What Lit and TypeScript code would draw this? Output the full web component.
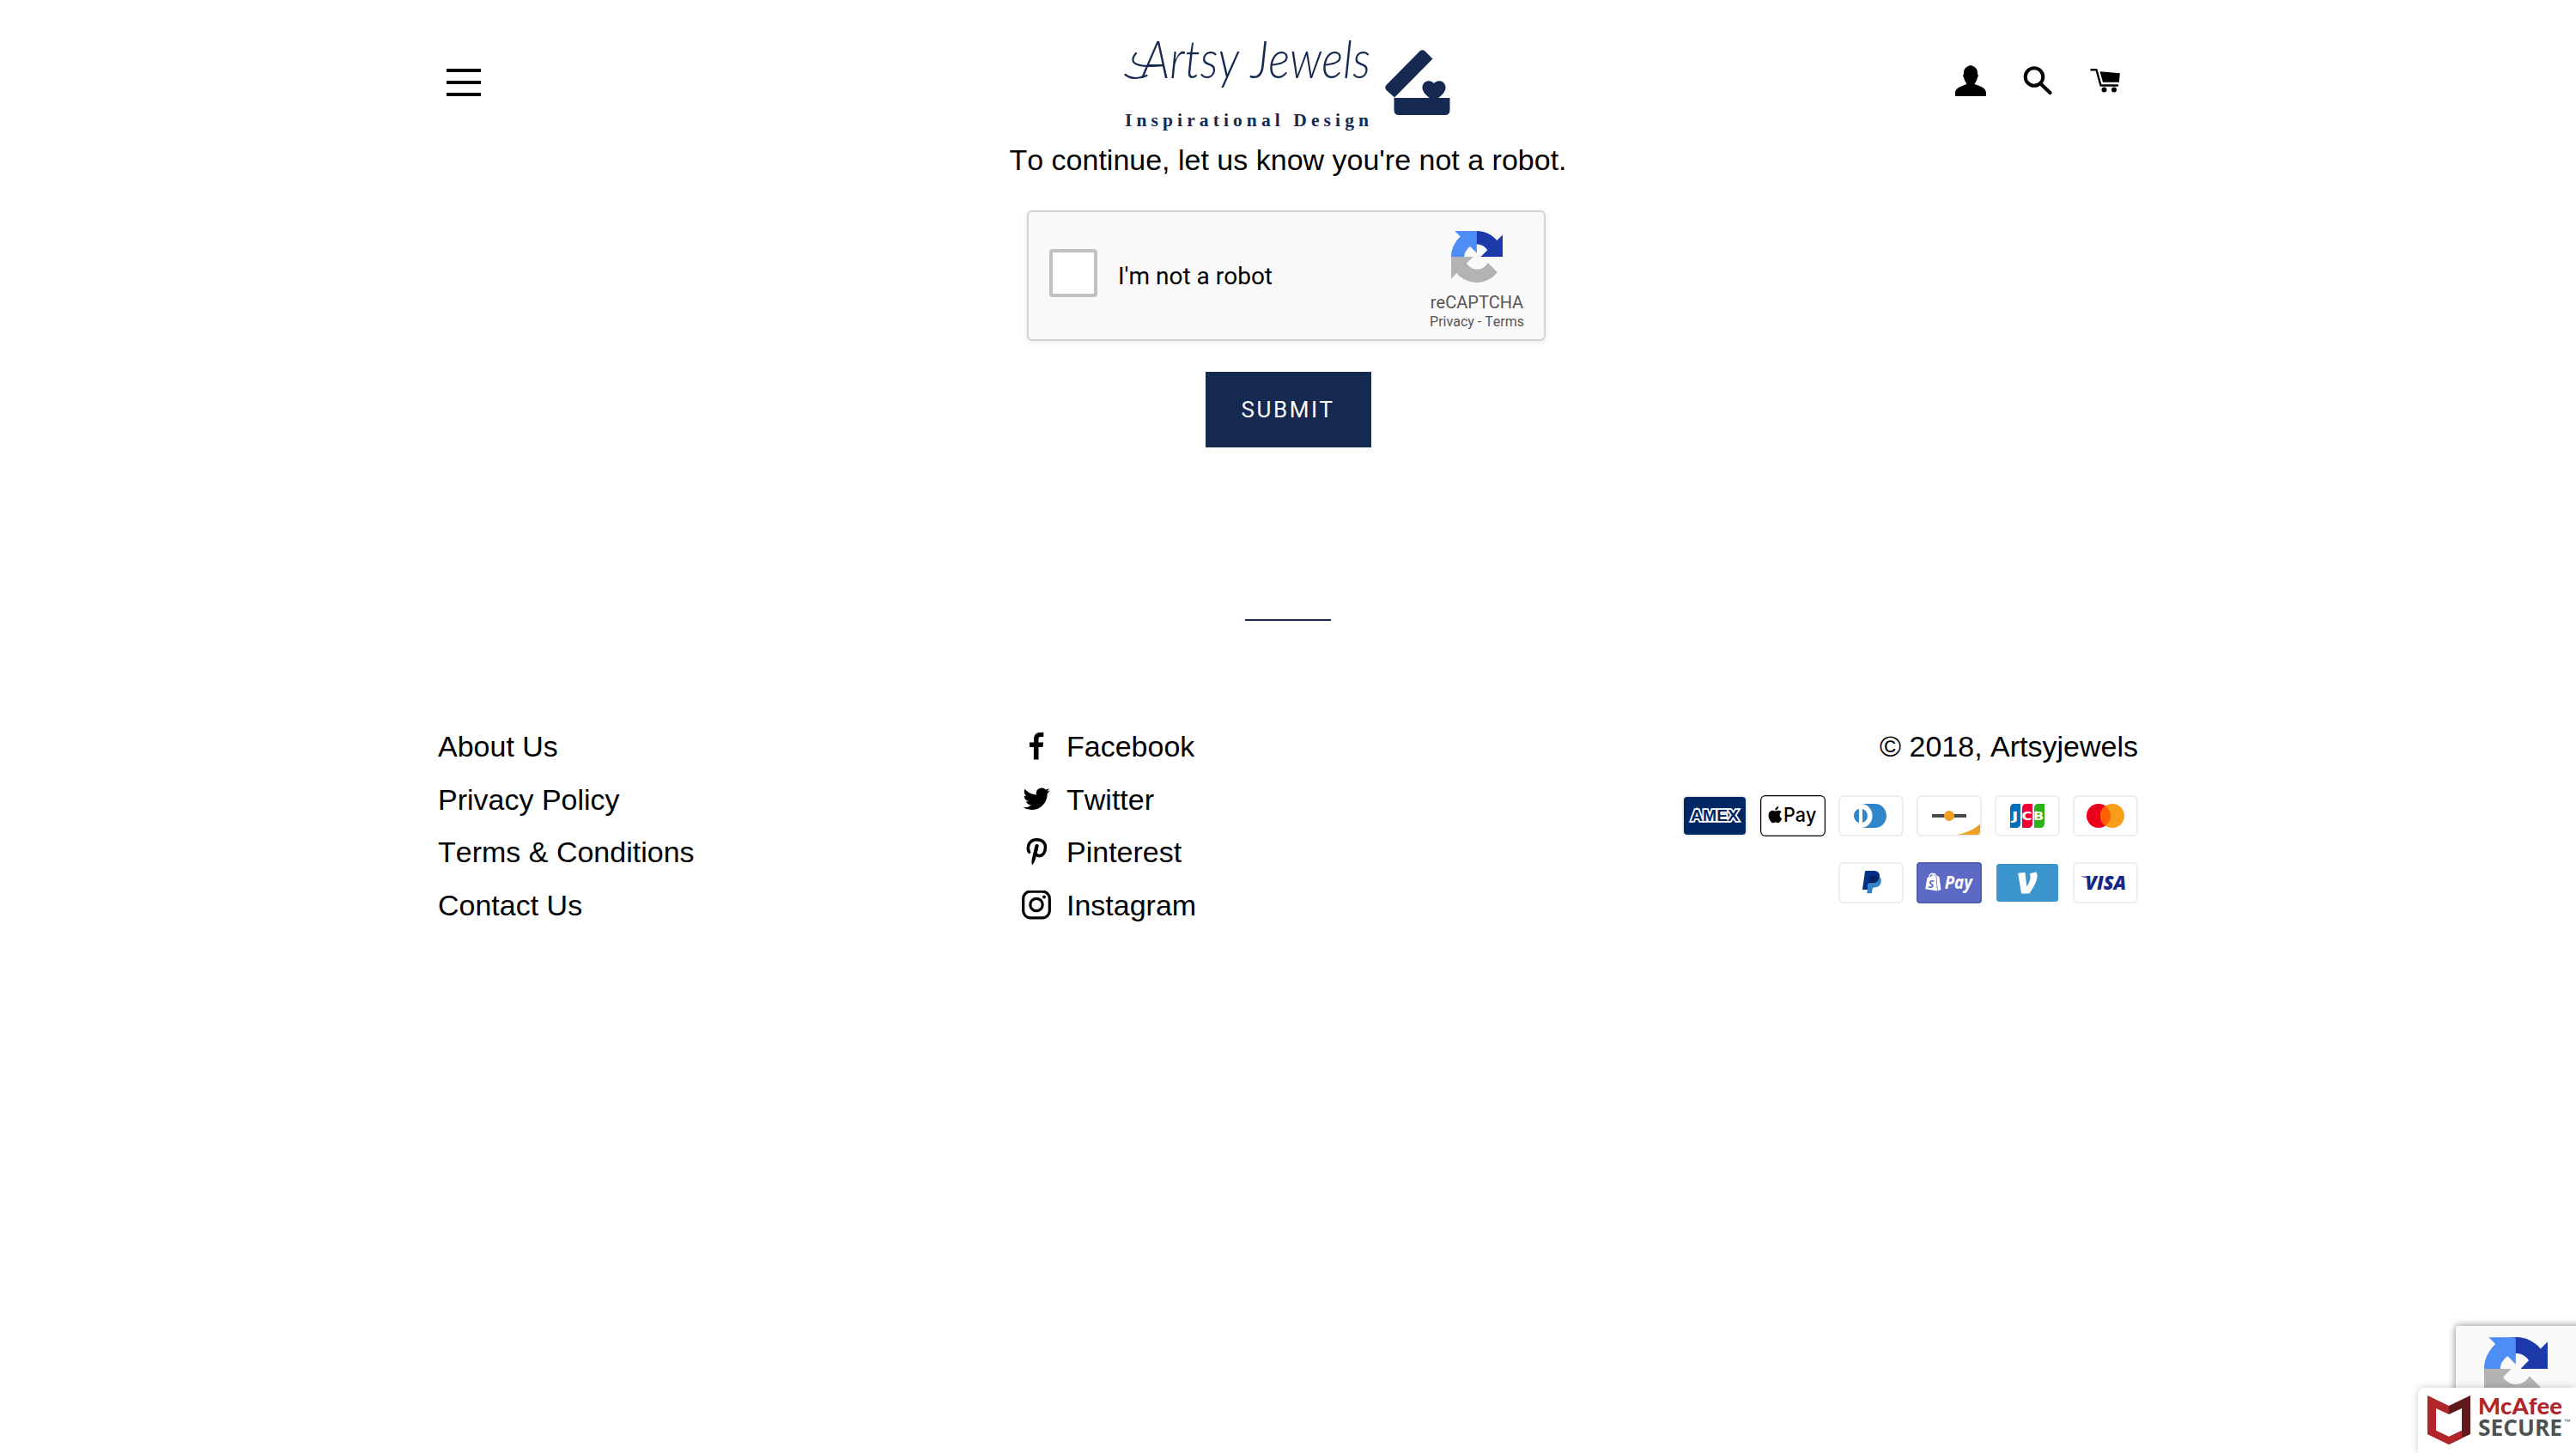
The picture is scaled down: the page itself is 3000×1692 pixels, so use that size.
import { LitElement, html, css, svg } from "lit";
import { customElement } from "lit/decorators.js";

const recaptchaMark = html`<svg class="mark" viewBox="0 0 64 64">
  <path fill="#1c3aa9" d="M64 31.955l-.033-1.37V4.687l-7.16 7.16C50.948 4.674 42.033.093 32.05.093c-10.4 0-19.622 4.96-25.458 12.64l11.736 11.86a15.55 15.55 0 0 1 4.754-5.334c2.05-1.6 4.952-2.906 8.968-2.906.485 0 .86.057 1.135.163 4.976.393 9.288 3.14 11.828 7.124l-8.307 8.307L64 31.953"/>
  <path fill="#4c8df6" d="M31.862.094l-1.37.033H4.594l7.16 7.16C4.58 13.147 0 22.06 0 32.046c0 10.4 4.96 19.622 12.64 25.458L24.5 45.768a15.55 15.55 0 0 1-5.334-4.754c-1.6-2.05-2.906-4.952-2.906-8.968 0-.485.057-.86.163-1.135.393-4.976 3.14-9.288 7.124-11.828l8.307 8.307L31.86.095"/>
  <path fill="#b3b3b3" d="M.001 32.045l.033 1.37v25.898l7.16-7.16c5.86 7.173 14.774 11.754 24.76 11.754 10.4 0 19.622-4.96 25.458-12.64l-11.736-11.86a15.55 15.55 0 0 1-4.754 5.334c-2.05 1.6-4.952 2.906-8.968 2.906-.485 0-.86-.057-1.135-.163-4.976-.393-9.288-3.14-11.828-7.124l8.307-8.307c-10.522.04-22.4.066-27.295-.005"/>
</svg>`;

const whiteCard = svg`<rect width="38" height="24" rx="3" fill="#ededed"/><rect x="1" y="1" width="36" height="22" rx="2" fill="#fff"/>`;

const cards = [
  svg`<rect width="38" height="24" rx="3" fill="#ededed"/><rect x="1" y="1" width="36" height="22" rx="2" fill="#002663"/>
    <text x="5" y="14.9" textLength="28" lengthAdjust="spacingAndGlyphs" font-family="Liberation Sans" font-weight="700" font-size="9" fill="#002663" stroke="#fff" stroke-width="1.7" paint-order="stroke">AMEX</text>`,
  svg`<rect width="38" height="24" rx="3" fill="#000"/><rect x=".6" y=".6" width="36.8" height="22.8" rx="2.4" fill="#fff"/>
    <path transform="translate(3.9 6.5) scale(.4)" d="M12.152 6.896c-.948 0-2.415-1.078-3.96-1.04-2.04.027-3.91 1.183-4.961 3.014-2.117 3.675-.546 9.103 1.519 12.09 1.013 1.454 2.208 3.09 3.792 3.039 1.52-.065 2.09-.987 3.935-.987 1.831 0 2.35.987 3.96.948 1.637-.026 2.676-1.48 3.676-2.948 1.156-1.688 1.636-3.325 1.662-3.415-.039-.013-3.182-1.221-3.22-4.857-.026-3.04 2.48-4.494 2.597-4.559-1.429-2.09-3.623-2.324-4.39-2.376-2-.156-3.675 1.09-4.61 1.09zM15.53 3.83c.843-1.012 1.4-2.427 1.245-3.83-1.207.052-2.662.805-3.532 1.818-.78.896-1.454 2.338-1.273 3.714 1.338.104 2.715-.688 3.559-1.701"/>
    <text x="13.5" y="15.6" textLength="19.2" lengthAdjust="spacingAndGlyphs" font-family="Inter" font-weight="500" font-size="11.5">Pay</text>`,
  svg`${whiteCard}<path d="M12 12v3.7c0 .3-.2.3-.5.2-1.9-.8-3-3.3-2.3-5.4.4-1.1 1.2-2 2.3-2.4.4-.2.5-.1.5.2V12zm2 0V8.3c0-.3 0-.3.3-.2 2.1.8 3.2 3.3 2.4 5.4-.4 1.1-1.2 2-2.3 2.4-.4.2-.4.1-.4-.2V12zm7.2-7H13c3.8 0 6.8 3.1 6.8 7s-3 7-6.8 7h8.2c3.8 0 6.8-3.1 6.8-7s-3-7-6.8-7z" fill="#3086C8"/>`,
  svg`${whiteCard}<path fill="#494949" d="M9 11h20v2H9z"/><circle cx="19" cy="12" r="3" fill="#eda024"/><path fill="#eda024" d="M37 16.8V21a2 2 0 0 1-2 2H23.5c5.5-1 10-3 13.5-6.2z"/>`,
  svg`${whiteCard}<path fill="#006ebc" d="M9 7.4C9 6 10 5 11.4 5H15v11.6C15 18 14 19 12.6 19H9z"/><path fill="#f00036" d="M16 7.4C16 6 17 5 18.4 5H22v11.6C22 18 21 19 19.6 19H16z"/><path fill="#2ab419" d="M23 7.4C23 6 24 5 25.4 5H29v11.6C29 18 28 19 26.6 19H23z"/>
    <g fill="#fff" font-family="DejaVu Sans" font-weight="700" font-size="6.6"><text transform="translate(10 14.5) scale(1.5 1)">J</text><text transform="translate(15.8 14.5) scale(1.25 1)">C</text><text transform="translate(22.5 14.5) scale(1.2 1)">B</text></g>`,
  svg`${whiteCard}<circle fill="#EB001B" cx="15" cy="12" r="7"/><circle fill="#F79E1B" cx="23" cy="12" r="7"/><path fill="#FF5F00" d="M22 12c0-2.4-1.2-4.5-3-5.7-1.8 1.3-3 3.4-3 5.7s1.2 4.5 3 5.7c1.8-1.2 3-3.3 3-5.7z"/>`,
  svg`${whiteCard}<path fill="#003087" d="M23.9 8.3c.2-1 0-1.7-.6-2.3-.6-.7-1.7-1-3.1-1h-4.1c-.3 0-.5.2-.6.5L14 15.6c0 .2.1.4.3.4H17l.4-3.4 1.8-2.2 4.7-2.1z"/><path fill="#3086C8" d="M23.9 8.3l-.2.2c-.5 2.8-2.2 3.8-4.6 3.8H18c-.3 0-.5.2-.6.5l-.6 3.9-.2 1c0 .2.1.4.3.4H19c.3 0 .5-.2.5-.4v-.1l.4-2.4v-.1c0-.2.3-.4.5-.4h.3c2.1 0 3.7-.8 4.1-3.2.2-1 .1-1.8-.4-2.4-.1-.5-.3-.7-.5-.8z"/><path fill="#012169" d="M23.3 8.1c-.1-.1-.2-.1-.3-.1-.1 0-.2 0-.3-.1-.3-.1-.7-.1-1.1-.1h-3c-.1 0-.2 0-.2.1-.2.1-.3.2-.3.4l-.7 4.4v.1c0-.3.3-.5.6-.5h1.3c2.5 0 4.1-1 4.6-3.8v-.2c-.1-.1-.3-.2-.5-.2h-.1z"/>`,
  svg`<rect width="38" height="24" rx="2" fill="#4f5bb5"/><rect x="1" y="1" width="36" height="22" rx="1" fill="#5c6ac4"/>
    <path fill="#fff" d="M6.2 9l5-1.4.8 9.2-6.9-1.2zM11.6 7.6l1.6.9 1 7.5-1.8.7z"/><path fill="none" stroke="#fff" stroke-width=".6" d="M7.3 9c.2-1.8 1.2-2.7 2-2.4.7.2.9 1 .9 1.7M8.8 8.3c.4-1.5 1.4-2 2-1.3.3.3.4.6.4.9"/>
    <text x="6.7" y="14.9" font-family="Open Sans" font-size="6.5" font-weight="700" font-style="italic" fill="#5c6ac4">S</text>
    <text x="16.4" y="15.7" textLength="16" lengthAdjust="spacingAndGlyphs" font-family="Open Sans" font-size="10.5" font-weight="700" font-style="italic" fill="#fff">Pay</text>`,
  svg`<rect x="1" y="1" width="36" height="22" rx="1.5" fill="#3d95ce"/><path fill="#fff" d="M24.2 5.7c.4.7.6 1.4.6 2.4 0 3-2.5 6.9-4.600 10.200h-4.700L13.600 6.400l4.100-.4 1 8.200c.9-1.500 2.100-4 2.100-5.600 0-.9-.2-1.500-.4-2z"/>`,
  svg`${whiteCard}<text x="7.3" y="16.1" textLength="23.8" lengthAdjust="spacingAndGlyphs" font-family="Open Sans" font-size="11" font-weight="800" font-style="italic" fill="#142688">VISA</text><path fill="#142688" d="M5.1 8.2h4.2l.8 1.9C8.8 9.2 7.2 8.700 5.100 8.500z"/>`,
];

const socials = [
  { name: "Facebook", icon: svg`<path d="M19.5 32.5V18h4.9l.7-5.6h-5.600V8.800c0-1.600.5-2.700 2.800-2.700h3V1.100C24.800 1 23 .9 21.300.9c-4.400 0-7.200 2.600-7.200 7.300v4.200H9v5.600h4.900v14.500z"/>` },
  { name: "Twitter", icon: svg`<path transform="translate(1.5 .6) scale(1.31)" d="M23.953 4.57a10 10 0 0 1-2.825.775 4.958 4.958 0 0 0 2.163-2.723c-.951.555-2.005.959-3.127 1.184a4.92 4.92 0 0 0-8.384 4.482C7.69 8.095 4.067 6.13 1.64 3.162a4.822 4.822 0 0 0-.666 2.475c0 1.71.87 3.213 2.188 4.096a4.904 4.904 0 0 1-2.228-.616v.06a4.923 4.923 0 0 0 3.946 4.827 4.996 4.996 0 0 1-2.212.085 4.936 4.936 0 0 0 4.604 3.417 9.867 9.867 0 0 1-6.102 2.105c-.39 0-.779-.023-1.17-.067a13.995 13.995 0 0 0 7.557 2.209c9.053 0 13.998-7.496 13.998-13.985 0-.21 0-.42-.015-.63A9.935 9.935 0 0 0 24 4.59z"/>` },
  { name: "Pinterest", icon: svg`<path fill="none" stroke="#000" stroke-width="3.6" stroke-linecap="round" d="M8.6 17.2C5.800 12.500 7.500 3.200 17 2.800c6.800-.2 10.500 3.800 10.500 8.800 0 5.800-3 10-7 10-2.700 0-4.500-1.500-4.700-3.300"/><path d="M15.500 9.300c1-2.200 4.600-1.800 4.200 1-.8 4.700-2.600 10.300-3.700 14.500-.8 3-2 5.700-4 7.700-.8-2.500-.7-5.500 0-8.300z"/>` },
  { name: "Instagram", icon: svg`<g fill="none" stroke="#000"><rect x="1.7" y="1.2" width="30.6" height="30.6" rx="8" stroke-width="3.2"/><circle cx="17" cy="16.5" r="7.2" stroke-width="3.2"/></g><circle cx="26" cy="7.6" r="2"/>` },
];

@customElement("recaptcha-box")
class RecaptchaBox extends LitElement {
  static styles = css`
    :host { display: flex; box-sizing: border-box; width: 604px; height: 152px; border: 2px solid #d3d3d3; border-radius: 6px; background: #f9f9f9; box-shadow: 0 2px 6px 1px rgba(0,0,0,.07); font-family: Roboto, sans-serif; align-items: flex-start; }
    .check { box-sizing: border-box; width: 56px; height: 56px; margin: 43px 0 0 24px; border: 4px solid #c1c1c1; border-radius: 4px; background: #fff; }
    .label { margin: 58px 0 0 24px; font-size: 28px; line-height: 34px; color: #000; flex: 1; }
    .brand { width: 140px; display: flex; flex-direction: column; align-items: center; color: #555; padding: 22px 8px 0 0; }
    .mark { width: 60px; height: 60px; display: block; }
    .name { font-size: 20px; line-height: 24px; margin-top: 11px; }
    .legal { font-size: 16px; line-height: 20px; margin-top: 1px; }
  `;
  render() {
    return html`<div class="check"></div><div class="label">I'm not a robot</div>
      <div class="brand">${recaptchaMark}<div class="name">reCAPTCHA</div><div class="legal">Privacy - Terms</div></div>`;
  }
}

@customElement("app-root")
class AppRoot extends LitElement {
  static styles = css`
    :host { display: block; height: 1692px; position: relative; overflow: hidden; background: #fff; color: #000; font: 34px/56px "Liberation Sans", Arial, sans-serif; font-kerning: none; }
    svg { display: block; }
    .header { display: grid; grid-template-columns: 1fr auto 1fr; width: 1980px; height: 158px; margin: 0 auto; align-items: start; }
    .menu { display: flex; flex-direction: column; gap: 10px; padding: 80px 0 0 10px; }
    .bar { width: 40px; height: 4px; background: #000; }
    .logo { width: 388px; height: 158px; }
    .tools { display: flex; justify-content: flex-end; gap: 41px; padding: 75px 18px 0 0; }
    .tool { width: 38px; height: 38px; }
    .main { display: flex; flex-direction: column; align-items: center; }
    .prompt { height: 87px; white-space: nowrap; }
    .captcha { margin-right: 4px; }
    .submit { margin-top: 36px; width: 193px; height: 88px; border: 0; padding: 0; background: #162950; color: #fff; font: 26px Roboto, sans-serif; letter-spacing: 2.6px; }
    .divider { width: 100px; height: 2px; background: #162950; margin: 200px auto 115px; }
    .footer { display: grid; grid-template-columns: 1fr 1fr 1fr; gap: 60px; width: 1980px; margin: 0 auto; }
    .row { display: flex; align-items: center; height: 61.8px; }
    .glyph { width: 34px; height: 34px; margin-right: 18px; }
    .right { display: flex; flex-direction: column; align-items: flex-end; }
    .pay { display: flex; flex-wrap: wrap; justify-content: flex-end; gap: 30px 15px; width: 560px; margin-top: 26px; }
    .card { width: 76px; height: 48px; }
    .badge { position: absolute; left: 2860px; top: 1544px; width: 512px; height: 120px; background: #f9f9f9; box-shadow: 0 0 10px gray; border-radius: 4px; }
    .badge .mark { width: 74px; height: 74px; margin: 13px 0 0 33px; }
    .seal { position: absolute; right: 0; bottom: 0; width: 184px; height: 76px; background: #fff; border-radius: 8px 0 0 0; box-shadow: 0 0 10px rgba(0,0,0,.2); }
  `;

  render() {
    return html`
      <header class="header">
        <div class="menu"><div class="bar"></div><div class="bar"></div><div class="bar"></div></div>
        <svg class="logo" viewBox="1306 0 388 158" fill="#162950">
          <text x="1330" y="91" textLength="266" lengthAdjust="spacingAndGlyphs" font-family="Lato" font-weight="300" font-style="italic" font-size="62">Artsy Jewels</text>
          <g fill="none" stroke="#162950" stroke-width="2.2" stroke-linecap="round"><path d="M1323 62c-11 13 4 17 31 14"/><path d="M1310.500 87c8 6 18 4 25 1"/></g>
          <text x="1310" y="146.5" textLength="284" font-family="Liberation Serif" font-weight="700" font-size="21.5">Inspirational Design</text>
          <path d="M1624 113.5l-9.500-8.500q-2.500-3 0-6l38-38.500q3.500-4 7-1l9 9zM1623.500 114h65v14q0 6-6 6h-53q-6 0-6-6z"/>
          <path d="M1665 114c-6-4-9-9-8.500-13 .8-7 9-9 13.500-4 4.500-5 12.700-3 13.500 4 .5 4-2.500 9-8.500 13z"/>
        </svg>
        <div class="tools">
          <svg class="tool" viewBox="0 0 38 38"><path d="M1 37v-4c0-6 8-8 13.500-10-1-2-3-4.500-3.500-8-1-.6-1.300-3 0-3.500C10.500 4.500 14 2.500 19 1c5 1.500 8.500 3.500 8 10.500 1.300.5 1 2.900 0 3.500-.5 3.500-2.500 6-3.500 8C29 25 37 27 37 33v4z"/></svg>
          <svg class="tool" viewBox="0 0 38 38"><g fill="none" stroke="#000"><circle cx="14" cy="14.500" r="10.300" stroke-width="4"/><path stroke-width="4.200" stroke-linecap="round" d="M22 23l10.500 10"/></g></svg>
          <svg class="tool" viewBox="0 0 38 38"><path fill="none" stroke="#000" stroke-width="2.400" stroke-linecap="round" stroke-linejoin="round" d="M1.500 6.200h6l5 18.300h19.500"/><path d="M11.500 8.300l23.300 2-.9 10.500H15z"/><circle cx="16.500" cy="29.500" r="3"/><circle cx="28" cy="29.500" r="3"/></svg>
        </div>
      </header>
      <main class="main">
        <div class="prompt">To continue, let us know you're not a robot.</div>
        <recaptcha-box class="captcha"></recaptcha-box>
        <button class="submit">SUBMIT</button>
      </main>
      <div class="divider"></div>
      <footer class="footer">
        <div>${["About Us", "Privacy Policy", "Terms & Conditions", "Contact Us"].map((t) => html`<div class="row">${t}</div>`)}</div>
        <div>${socials.map((s) => html`<div class="row"><svg class="glyph" viewBox="0 0 34 34">${s.icon}</svg>${s.name}</div>`)}</div>
        <div class="right">
          <div class="row">© 2018, Artsyjewels</div>
          <div class="pay">${cards.map((c) => html`<svg class="card" viewBox="0 0 38 24">${c}</svg>`)}</div>
        </div>
      </footer>
      <div class="badge">${recaptchaMark}</div>
      <div class="seal">
        <svg width="184" height="76" viewBox="2816 1616 184 76">
          <path fill="#b1252b" d="M2827 1625l25 12v10l-15-7v26l15 7v9l-25-12z"/>
          <path fill="#5f1b1c" d="M2877 1625l-25 12v10l15-7v26l-15 7v9l25-12z"/>
          <path fill="#b1252b" d="M2852 1682l-25-12 10-4 15 7 15-7v9z"/>
          <text x="2886" y="1647" textLength="98" lengthAdjust="spacingAndGlyphs" font-family="Lato" font-weight="900" font-size="27" fill="#b1252b">McAfee</text>
          <text x="2886" y="1672" textLength="98" lengthAdjust="spacingAndGlyphs" font-family="Open Sans" font-weight="700" font-size="26" fill="#4d5152">SECURE</text>
          <text x="2985.5" y="1658" font-family="Liberation Sans" font-size="8" fill="#4d5152">™</text>
        </svg>
      </div>`;
  }
}
